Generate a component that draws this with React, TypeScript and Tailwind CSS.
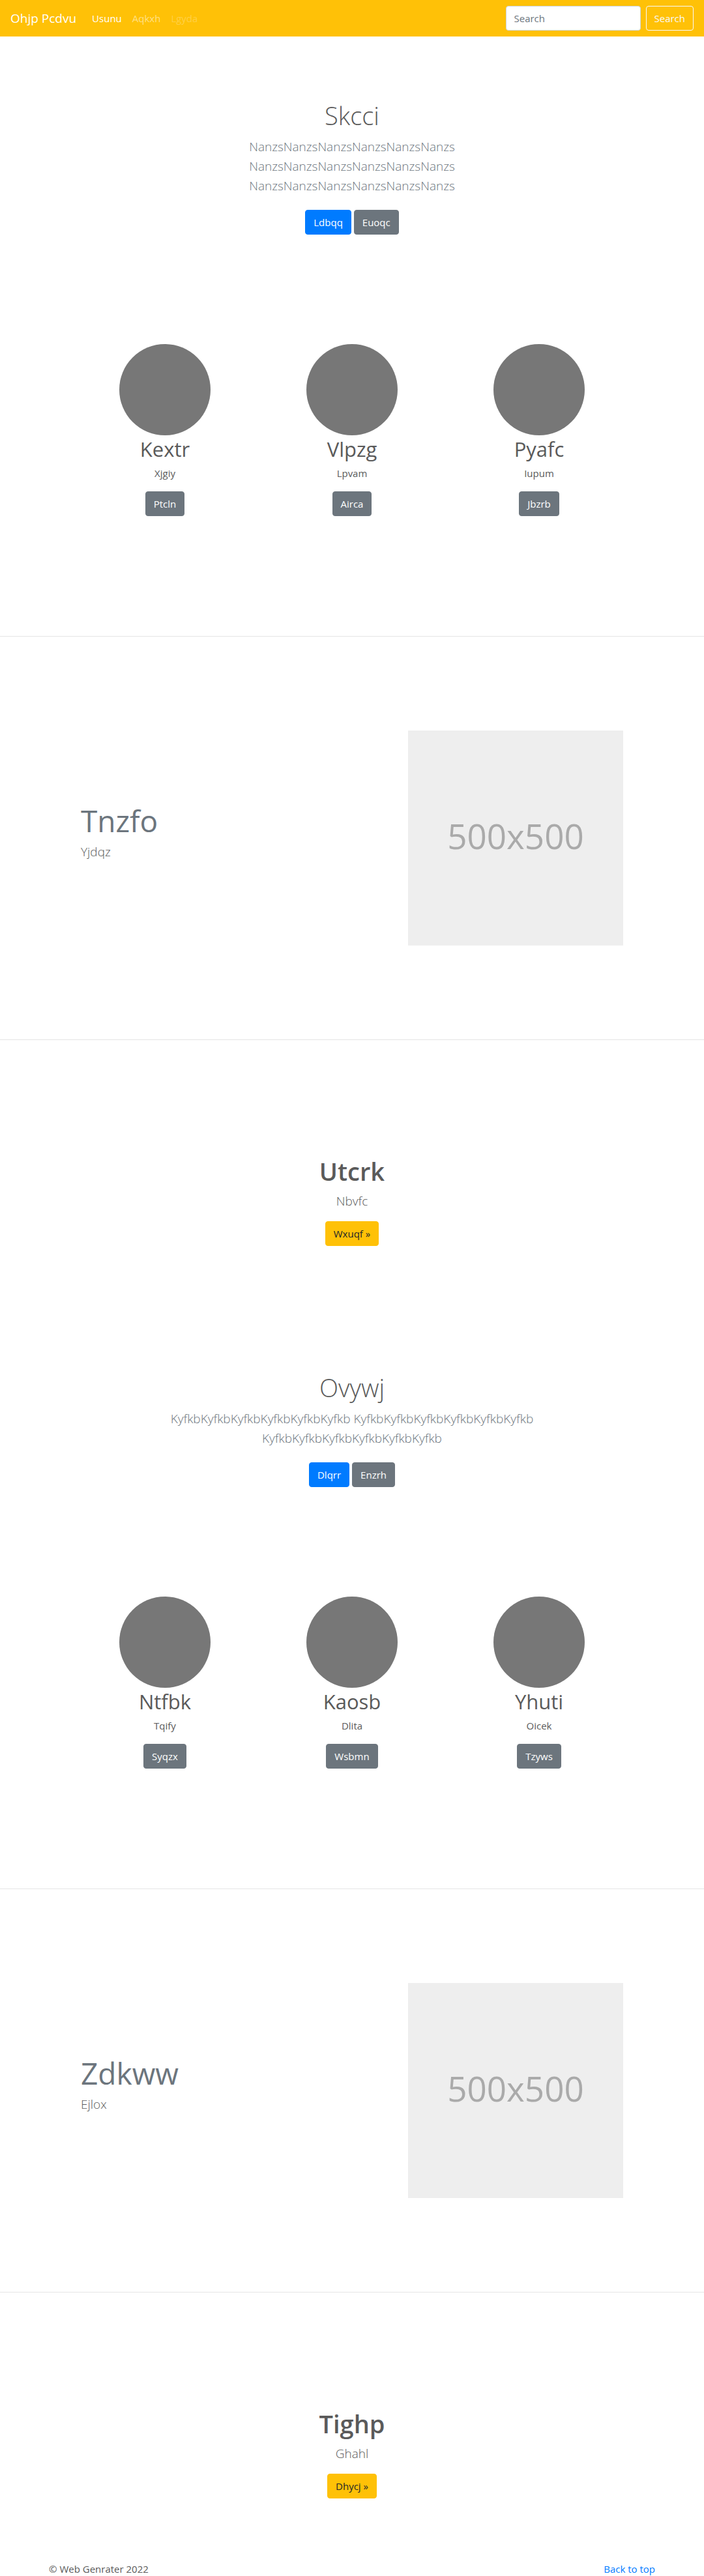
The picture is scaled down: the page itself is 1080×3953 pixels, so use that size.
import type { ReactNode } from "react";

type Item = { title: string; text: string; action: string };

const buttonStyles = {
  primary: "border-[#007bff] bg-[#007bff] text-white",
  secondary: "border-[#6c757d] bg-[#6c757d] text-white",
  warning: "border-[#ffc107] bg-[#ffc107] text-[#212529]",
};

function Button({ kind, children }: { kind: keyof typeof buttonStyles; children: ReactNode }) {
  return (
    <button type="button" className={`h-[38px] rounded border px-3 text-[15px] leading-6 ${buttonStyles[kind]}`}>
      {children}
    </button>
  );
}

function Navbar() {
  return (
    <nav className="flex h-14 items-center bg-[#ffc107] px-4 text-[15px] leading-6">
      <a href="#" className="mr-6 text-[19px] leading-[30px] text-white">Ohjp Pcdvu</a>
      <ul className="flex flex-1 gap-4">
        <li><a href="#" className="text-white">Usunu</a></li>
        <li><a href="#" className="text-white/50">Aqkxh</a></li>
        <li><a href="#" aria-disabled="true" className="text-white/25">Lgyda</a></li>
      </ul>
      <form className="flex gap-2" onSubmit={(e) => e.preventDefault()}>
        <input
          type="text"
          placeholder="Search"
          aria-label="Search"
          className="h-[38px] w-[207px] rounded border border-[#ced4da] bg-white px-3 text-[#495057] placeholder:text-[#6c757d]"
        />
        <button type="submit" className="h-[38px] rounded border border-[#f8f9fa] px-3 text-[#f8f9fa]">Search</button>
      </form>
    </nav>
  );
}

function Hero({ title, text, actions }: { title: string; text: string; actions: [string, string] }) {
  return (
    <section className="mx-auto max-w-[560px] pt-24 pb-20 text-center">
      <h1 className="mb-2 text-[38px] leading-[50px] font-light">{title}</h1>
      <p className="mb-[22px] text-[19px] leading-[30px] font-light text-[#6c757d]">{text}</p>
      <div className="flex justify-center gap-1">
        <Button kind="primary">{actions[0]}</Button>
        <Button kind="secondary">{actions[1]}</Button>
      </div>
    </section>
  );
}

function Columns({ items }: { items: Item[] }) {
  return (
    <section className="mx-auto grid max-w-[861px] grid-cols-3 pt-[88px] pb-[184px]">
      {items.map((item) => (
        <div key={item.title} className="flex flex-col items-center">
          <div className="size-[140px] rounded-full bg-[#777777]" />
          <h2 className="mb-1 text-[31px] leading-[42px]">{item.title}</h2>
          <p className="mb-4 text-[15px] leading-6">{item.text}</p>
          <Button kind="secondary">{item.action}</Button>
        </div>
      ))}
    </section>
  );
}

function Featurette({ title, text }: { title: string; text: string }) {
  return (
    <section className="border-y border-black/10">
      <div className="mx-auto flex max-w-[960px] items-center justify-between px-16 py-36">
        <div className="pb-4">
          <h2 className="mb-2 text-[46px] leading-[50px] text-[#6c757d]">{title}</h2>
          <p className="text-[19px] leading-[30px] font-light">{text}</p>
        </div>
        <div
          role="img"
          aria-label="500x500"
          className="flex size-[330px] items-center justify-center bg-[#eeeeee] pb-2 text-[53px] leading-none text-[#aaaaaa]"
        >
          500x500
        </div>
      </div>
    </section>
  );
}

function CallToAction({ title, text, action }: Item) {
  return (
    <section className="flex flex-col items-center pt-44 pb-24">
      <h2 className="mb-1.5 text-[38px] leading-[50px] font-semibold">{title}</h2>
      <p className="mb-4 text-[19px] leading-[30px] font-light">{text}</p>
      <Button kind="warning">{action}</Button>
    </section>
  );
}

export default function App() {
  return (
    <div className="bg-white font-['Segoe_UI','Open_Sans','Noto_Sans',sans-serif] text-[#5a5a5a]">
      <Navbar />
      <main>
        <Hero
          title="Skcci"
          text="NanzsNanzsNanzsNanzsNanzsNanzs NanzsNanzsNanzsNanzsNanzsNanzs NanzsNanzsNanzsNanzsNanzsNanzs"
          actions={["Ldbqq", "Euoqc"]}
        />
        <Columns
          items={[
            { title: "Kextr", text: "Xjgiy", action: "Ptcln" },
            { title: "Vlpzg", text: "Lpvam", action: "Airca" },
            { title: "Pyafc", text: "Iupum", action: "Jbzrb" },
          ]}
        />
        <Featurette title="Tnzfo" text="Yjdqz" />
        <CallToAction title="Utcrk" text="Nbvfc" action="Wxuqf »" />
        <Hero
          title="Ovywj"
          text="KyfkbKyfkbKyfkbKyfkbKyfkbKyfkb KyfkbKyfkbKyfkbKyfkbKyfkbKyfkb KyfkbKyfkbKyfkbKyfkbKyfkbKyfkb"
          actions={["Dlqrr", "Enzrh"]}
        />
        <Columns
          items={[
            { title: "Ntfbk", text: "Tqify", action: "Syqzx" },
            { title: "Kaosb", text: "Dlita", action: "Wsbmn" },
            { title: "Yhuti", text: "Oicek", action: "Tzyws" },
          ]}
        />
        <Featurette title="Zdkww" text="Ejlox" />
        <CallToAction title="Tighp" text="Ghahl" action="Dhycj »" />
      </main>
      <footer className="mx-auto flex max-w-[960px] justify-between px-[15px] text-[15px] leading-6">
        <p>© Web Genrater 2022</p>
        <a href="#" className="text-[#007bff]">Back to top</a>
      </footer>
    </div>
  );
}
